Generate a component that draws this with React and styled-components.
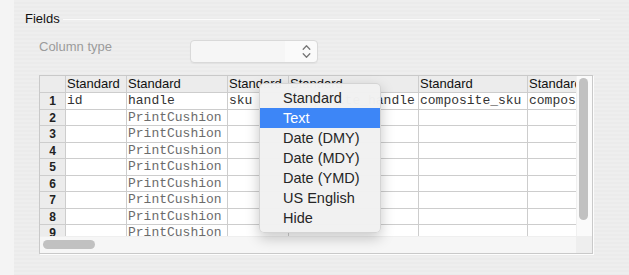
import React from "react";
import styled, { createGlobalStyle } from "styled-components";

const Global = createGlobalStyle`
  html, body { margin: 0; padding: 0; }
  body {
    width: 629px;
    height: 275px;
    overflow: hidden;
    font-family: "Liberation Sans", Arial, sans-serif;
  }
`;

const Window = styled.div`
  position: relative;
  display: flex;
  width: 629px;
  height: 275px;
  overflow: hidden;
`;

const EdgeStrip = styled.div`
  width: 14px;
  flex: none;
  background: #f4f4f4;
`;

const Pane = styled.div`
  flex: 1;
  display: flex;
  flex-direction: column;
  padding: 11px 29px 0 11px;
  background: repeating-linear-gradient(
    to bottom,
    #eeeeee 0px,
    #eeeeee 2px,
    #ebebeb 2px,
    #ebebeb 4px
  );
`;

const Legend = styled.div`
  display: flex;
  align-items: center;
  height: 16px;
  gap: 3px;
`;

const LegendTitle = styled.span`
  font-size: 13px;
  line-height: 16px;
  color: #111;
`;

const LegendRule = styled.div`
  flex: 1;
  height: 1px;
  background: #fbfbfb;
  margin-top: 0px;
`;

const Body = styled.div`
  display: flex;
  flex-direction: column;
  padding-left: 14px;
`;

const FieldRow = styled.div`
  display: flex;
  align-items: flex-start;
  margin-top: 13px;
  height: 23px;
`;

const FieldLabel = styled.span`
  width: 151px;
  font-size: 13px;
  line-height: 16px;
  margin-top: -1px;
  color: #9b9b9b;
`;

const Select = styled.div`
  box-sizing: border-box;
  width: 128px;
  height: 23px;
  border: 1px solid #d9d9d9;
  border-radius: 4px;
  background: linear-gradient(to right, #f6f6f6 0, #f6f6f6 75%, #fafafa 75%);
  box-shadow: 0 1px 1px rgba(0, 0, 0, 0.04);
  display: flex;
  align-items: center;
  justify-content: flex-end;
  padding-right: 6px;
`;

const Frame = styled.div`
  margin-top: 12px;
  box-sizing: border-box;
  width: 554px;
  height: 179px;
  border: 1px solid #c9c9c9;
  box-shadow: 1px 1px 0 #fdfdfd;
  background: #ffffff;
  display: grid;
  grid-template-columns: 536px 16px;
  grid-template-rows: 160px 17px;
`;

const Viewport = styled.div`
  overflow: hidden;
  background: #ffffff;
`;

const Sheet = styled.div`
  display: grid;
  grid-template-columns: 25px 60px 100px 60px 129px 108px 120px;
  grid-template-rows: 16px 16px 15px 16px 15px 16px 15px 16px 15px 16px;
  gap: 1px;
  background: #cdcdcd;
  width: max-content;
`;

const HeadCell = styled.div`
  background: #ececec;
  font-size: 13px;
  line-height: 16px;
  color: #111;
  padding-left: 1px;
  white-space: nowrap;
  overflow: hidden;
`;

const NumCell = styled.div`
  background: #ececec;
  font-size: 12px;
  font-weight: bold;
  line-height: 16px;
  color: #222;
  text-align: center;
  overflow: hidden;
`;

const DataCell = styled.div`
  background: #ffffff;
  font-family: "Liberation Mono", "Courier New", monospace;
  font-size: 13px;
  line-height: 16px;
  padding-left: 1px;
  color: ${(p) => (p.$muted ? "#6b6b6b" : "#333")};
  white-space: nowrap;
  overflow: hidden;
`;

const VTrack = styled.div`
  background: #fafafa;
  border-left: 1px solid #f0f0f0;
  position: relative;
`;

const VThumb = styled.div`
  position: absolute;
  left: 2px;
  top: 2px;
  width: 9px;
  height: 142px;
  border-radius: 5px;
  background: #c1c1c1;
`;

const HTrack = styled.div`
  background: #f6f6f6;
  border-top: 1px solid #efefef;
  position: relative;
`;

const HThumb = styled.div`
  position: absolute;
  left: 3px;
  top: 3px;
  width: 52px;
  height: 9px;
  border-radius: 5px;
  background: #c1c1c1;
`;

const Corner = styled.div`
  background: #eeeeee;
`;

const Menu = styled.div`
  position: absolute;
  left: 259px;
  top: 83px;
  width: 122px;
  box-sizing: border-box;
  padding: 4px 0;
  border-radius: 5px;
  background: rgba(241, 241, 241, 0.98);
  border: 0.5px solid rgba(0, 0, 0, 0.12);
  box-shadow: 0 5px 14px rgba(0, 0, 0, 0.22);
`;

const MenuItem = styled.div`
  height: 20px;
  line-height: 20px;
  padding-left: 23px;
  font-size: 14.5px;
  color: ${(p) => (p.$active ? "#ffffff" : "#262626")};
  background: ${(p) => (p.$active ? "#3d86f7" : "transparent")};
`;

const Chevrons = () => (
  <svg width="9" height="15" viewBox="0 0 9 15" fill="none">
    <path d="M1.2 5.2 L4.5 1.8 L7.8 5.2" stroke="#777" strokeWidth="1.3" strokeLinecap="round" strokeLinejoin="round" />
    <path d="M1.2 9.8 L4.5 13.2 L7.8 9.8" stroke="#777" strokeWidth="1.3" strokeLinecap="round" strokeLinejoin="round" />
  </svg>
);

const headers = ["Standard", "Standard", "Standard", "Standard", "Standard", "Standard"];
const firstRow = ["id", "handle", "sku", "composite_handle", "composite_sku", "composite_title"];
const menuItems = ["Standard", "Text", "Date (DMY)", "Date (MDY)", "Date (YMD)", "US English", "Hide"];

export default function App() {
  const rows = [];
  for (let r = 1; r <= 9; r++) {
    const values = r === 1 ? firstRow : ["", "PrintCushion", "", "", "", ""];
    rows.push(<NumCell key={`n${r}`}>{r}</NumCell>);
    values.forEach((v, i) =>
      rows.push(
        <DataCell key={`c${r}-${i}`} $muted={r > 1}>
          {v}
        </DataCell>
      )
    );
  }

  return (
    <Window>
      <Global />
      <EdgeStrip />
      <Pane>
        <Legend>
          <LegendTitle>Fields</LegendTitle>
          <LegendRule />
        </Legend>
        <Body>
          <FieldRow>
            <FieldLabel>Column type</FieldLabel>
            <Select>
              <Chevrons />
            </Select>
          </FieldRow>
          <Frame>
            <Viewport>
              <Sheet>
                <HeadCell />
                {headers.map((h, i) => (
                  <HeadCell key={i}>{h}</HeadCell>
                ))}
                {rows}
              </Sheet>
            </Viewport>
            <VTrack>
              <VThumb />
            </VTrack>
            <HTrack>
              <HThumb />
            </HTrack>
            <Corner />
          </Frame>
        </Body>
      </Pane>
      <Menu>
        {menuItems.map((m) => (
          <MenuItem key={m} $active={m === "Text"}>
            {m}
          </MenuItem>
        ))}
      </Menu>
    </Window>
  );
}
